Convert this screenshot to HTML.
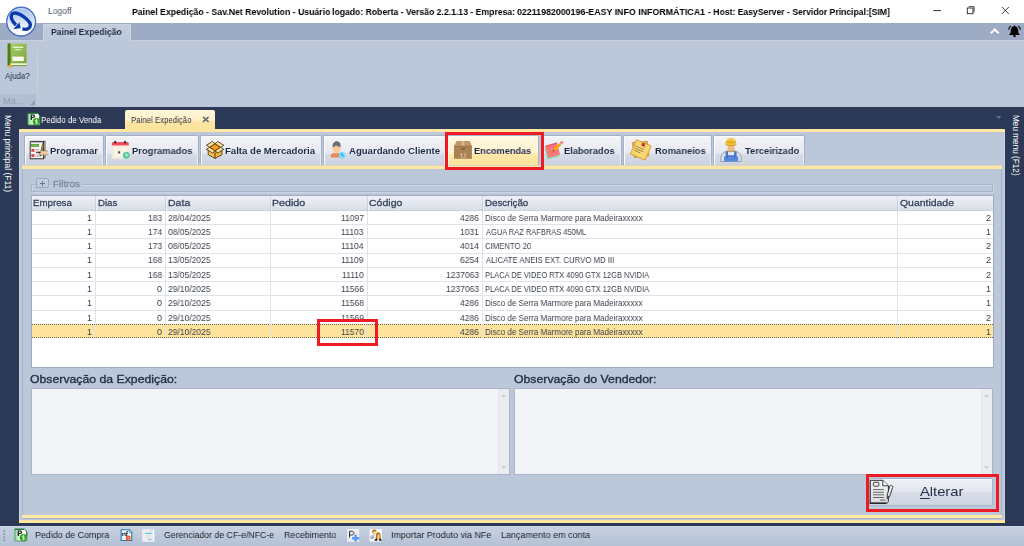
<!DOCTYPE html>
<html>
<head>
<meta charset="utf-8">
<title>Painel Expedição</title>
<style>
*{box-sizing:border-box;margin:0;padding:0}
html,body{width:1024px;height:546px;overflow:hidden;background:#2b3957;font-family:"Liberation Sans",sans-serif;}
.a{position:absolute}
.t{position:absolute;white-space:nowrap;line-height:1;transform-origin:0 50%;will-change:transform}
.r{position:absolute;white-space:nowrap;line-height:1;transform-origin:0 0}
svg{position:absolute;overflow:visible}
#titlebar{left:0;top:0;width:1024px;height:23px;background:#fff}
#tabstrip{left:0;top:23px;width:1024px;height:17px;background:#9dabc4}
#ribbon{left:0;top:40px;width:1024px;height:67px;background:#bcc8da;border-top:1px solid #c7d1e0}
#rtab{left:43px;top:24px;width:88px;height:17px;background:linear-gradient(#c3cddd,#bcc8da);border:1px solid #cad3e1;border-bottom:none;border-radius:1px 1px 0 0}
#navy{left:0;top:107px;width:1024px;height:418px;background:#2b3957}
#status{left:0;top:526px;width:1024px;height:20px;background:linear-gradient(#d3dbe8 0,#c6d0e0 1.5px,#c1ccdd 6px,#b4c0d4 100%)}
.yl{background:#fde7a2}
.itab{position:absolute;top:135px;height:30px;background:linear-gradient(#f3f4f7 0%,#e6e9f0 58%,#d6dbe6 64%,#cbd2df 100%);border:1px solid #a3b0c6;border-bottom:none;border-radius:2px 2px 0 0;box-shadow:inset 1px 1px 0 #fafbfc, inset -1px 0 0 #e9ecf2}
.itab.sel{background:linear-gradient(#fff7e2 0%,#fff2cf 58%,#fee7a8 64%,#fde39c 100%);border-color:#a9b3c7;box-shadow:inset 1px 1px 0 #fffbee}
.vl{position:absolute;width:1px;background:#dfe3ec}
.hl{position:absolute;height:1px;background:#dfe3ec;left:32px;width:961px}
.ta{position:absolute;background:#f3f4f6;border:1px solid #a9b5c9}
.sb{position:absolute;right:0;top:0;bottom:0;width:11px;background:#ebecf0;border-left:1px solid #e2e4ea}
</style>
</head>
<body>
<div class="a" id="titlebar"></div>
<div class="a" id="tabstrip"></div>
<div class="a" id="ribbon"></div>
<div class="a" id="rtab"></div>
<div class="a" id="navy"></div>
<div class="a" id="status"></div>

<!-- window controls -->
<svg style="left:925px;top:0" width="99" height="23" viewBox="0 0 99 23">
 <path d="M8.3 10.6H16" stroke="#333" stroke-width="1" fill="none"/>
 <path d="M43.6 6.6h5.6v5.6" stroke="#444" stroke-width="0.9" fill="none"/>
 <rect x="42.3" y="8" width="5.7" height="5.7" stroke="#222" stroke-width="0.9" fill="#fff"/>
 <path d="M76.8 7l7 7M83.8 7l-7 7" stroke="#222" stroke-width="0.9" fill="none"/>
</svg>
<!-- chevron + bell -->
<svg style="left:988px;top:24px" width="36" height="16" viewBox="0 0 36 16">
 <path d="M2.700 10.400L6.700 6.400L10.700 10.400" stroke="#8c99b2" stroke-width="2.200" fill="none" stroke-linejoin="miter"/>
 <path d="M2.700 9.600L6.700 5.600L10.700 9.600" stroke="#fff" stroke-width="2.100" fill="none" stroke-linejoin="miter"/>
 <path d="M26.500 1.400c-0.500 0-0.900 0.400-1 0.900c-1.700 0.500-2.700 2-2.700 4.200c0 2.200-0.600 3.400-1.800 4.400h11c-1.200-1-1.800-2.200-1.800-4.400c0-2.200-1-3.700-2.700-4.200c-0.100-0.500-0.500-0.900-1-0.900z" fill="#000"/>
 <circle cx="26.500" cy="12" r="1.200" fill="#000"/>
 <path d="M20.600 5.900c0.100-1.700 0.900-3 2.300-3.900M32.400 5.900c-0.100-1.700-0.900-3-2.300-3.900" stroke="#111" stroke-width="1.150" fill="none"/>
</svg>

<!-- logo -->
<svg style="left:5px;top:6px" width="32" height="32" viewBox="0 0 32 32">
 <defs>
  <linearGradient id="lg1" x1="0" y1="0" x2="0" y2="1"><stop offset="0" stop-color="#a4bcef"/><stop offset="0.4" stop-color="#cbd9f7"/><stop offset="0.75" stop-color="#f4f7fd"/><stop offset="1" stop-color="#ffffff"/></linearGradient>
 </defs>
 <circle cx="16.150" cy="15.650" r="14.400" fill="url(#lg1)" stroke="#4a70cc" stroke-width="1.400"/>
 <circle cx="16.150" cy="15.650" r="13.100" fill="none" stroke="#ffffff" stroke-width="0.800" opacity="0.550"/>
 <path d="M17.400 22.900C20 23.500 23.600 23.300 24.900 21C26.500 18.200 23.500 13.900 18.200 10.300C13.500 7.200 8.800 6.200 7 8.200C5.300 10.200 6.300 14.500 11 19" fill="none" stroke="#0a3aa8" stroke-width="3.300"/>
 <path d="M14.400 16.200L15.700 21.900L8.300 23.300z" fill="#0a3aa8"/>
</svg>

<!-- ribbon: book icon, group -->
<div class="a" style="left:0;top:94px;width:36px;height:12.5px;background:#b2bfd3"></div>
<div class="a" style="left:37px;top:43px;width:1px;height:62px;background:linear-gradient(#bcc8da,#c9d2e1 30%,#c9d2e1 70%,#bcc8da)"></div>
<svg style="left:7px;top:43px" width="21" height="25" viewBox="0 0 21 25">
 <defs><linearGradient id="bk" x1="0" y1="0" x2="1" y2="1"><stop offset="0" stop-color="#a9d06a"/><stop offset="1" stop-color="#7aa33e"/></linearGradient></defs>
 <rect x="0.600" y="0.400" width="19" height="22" rx="1.200" fill="url(#bk)"/>
 <rect x="0.600" y="0.400" width="3" height="22" fill="#4f7d1e"/>
 <rect x="3.400" y="20.300" width="16.200" height="2.100" fill="#f3f0dc"/>
 <rect x="0.600" y="22.200" width="19" height="0.900" fill="#6a9430"/>
 <rect x="5.800" y="3.600" width="10.500" height="1.300" fill="#eef5dd"/>
 <rect x="8" y="6.100" width="6" height="1.200" fill="#dcebbf"/>
 <rect x="5.300" y="13.600" width="11.500" height="4.400" fill="#fdf6ea"/>
 <rect x="2" y="21.800" width="3.200" height="2.600" fill="#f5a623"/>
</svg>
<svg style="left:29px;top:99px" width="7" height="7" viewBox="0 0 7 7"><path d="M6 1v5h-5z" fill="#8f9cb3"/></svg>

<!-- doc tabs -->
<div class="a" style="left:125px;top:110px;width:89.500px;height:20px;background:linear-gradient(#fff6da 0%,#fff0c6 50%,#fde5a3 60%,#fde29c 100%);border-radius:2px 2px 0 0"></div>
<svg style="left:202px;top:116px" width="8" height="7" viewBox="0 0 8 7"><path d="M1 0.800l5.600 5M6.600 0.800l-5.600 5" stroke="#6b6f7a" stroke-width="1.700" fill="none"/></svg>
<svg style="left:996px;top:116px" width="6" height="4" viewBox="0 0 6 4"><path d="M0 0h5.500l-2.750 3.200z" fill="#5d6b8a"/></svg>
<svg style="left:27px;top:112px" width="14" height="14" viewBox="0 0 14 14">
 <defs><linearGradient id="psg" x1="0" y1="0" x2="1" y2="0"><stop offset="0" stop-color="#8fdc92"/><stop offset="0.45" stop-color="#e9f8e9"/><stop offset="1" stop-color="#ffffff"/></linearGradient></defs>
 <path d="M0.900 1.100H10.200L12.800 3.700V13H0.900z" fill="url(#psg)" stroke="#2f8a4a" stroke-width="0.700"/>
 <path d="M0.900 1.200H10.200L12.800 3.800" fill="none" stroke="#0e5a2a" stroke-width="1.100"/>
 <path d="M12.800 3.800V8" fill="none" stroke="#0e5a2a" stroke-width="0.900"/>
 <path d="M10.200 1.100L12.800 3.700H10.200z" fill="#dff3e2"/>
 <path d="M3.700 7.900V2.600h2.400c1.200 0 1.900 0.600 1.900 1.700s-0.700 1.700-1.900 1.700h-1.200v1.900zM4.900 3.500v1.600h1.100c0.500 0 0.800-0.300 0.800-0.800s-0.300-0.800-0.800-0.800z" fill="#1a1a1a" fill-rule="evenodd"/>
 <circle cx="9.400" cy="9.600" r="3.600" fill="#2f9e1c"/>
 <path d="M10.700 8.500c-0.300-0.500-0.800-0.700-1.300-0.700c-0.700 0-1.200 0.350-1.200 0.900c0 1.300 2.600 0.500 2.600 1.900c0 0.550-0.500 0.950-1.300 0.950c-0.600 0-1.100-0.250-1.400-0.750M9.400 6.900v5.400" fill="none" stroke="#d9f5d2" stroke-width="0.850"/>
</svg>


<!-- panels -->
<div class="a yl" style="left:19.200px;top:129px;width:986px;height:3px;border-radius:1px 1px 0 0"></div>
<div class="a" style="left:19.200px;top:132px;width:986px;height:388.300px;background:#bcc8da;border-left:1px solid #c9d2e1;border-right:1px solid #c9d2e1"></div>
<div class="a yl" style="left:19.200px;top:520.300px;width:986px;height:3px"></div>
<div class="a" style="left:22px;top:165px;width:980px;height:1px;background:#d8d6c2"></div>
<div class="a yl" style="left:22px;top:166px;width:980px;height:3px"></div>
<div class="a" style="left:22px;top:169px;width:980px;height:345.800px;background:#bcc8da;border-left:1px solid #a9b5ca;border-right:1px solid #a9b5ca"></div>
<div class="a yl" style="left:22px;top:514.800px;width:980px;height:3px"></div>
<div class="a" style="left:22px;top:517.800px;width:980px;height:1px;background:#a9b5ca"></div>

<!-- inner tabs -->
<div class="itab" style="left:23.500px;width:80.500px"></div>
<div class="itab" style="left:105.300px;width:94px"></div>
<div class="itab" style="left:200.400px;width:121.400px"></div>
<div class="itab" style="left:323px;width:122.600px"></div>
<div class="itab sel" style="left:447px;width:92.400px"></div>
<div class="itab" style="left:541.200px;width:80.400px"></div>
<div class="itab" style="left:623px;width:88.800px"></div>
<div class="itab" style="left:713px;width:92.300px"></div>
<!-- Programar: checklist + hand -->
<svg style="left:29px;top:140px" width="20" height="20" viewBox="0 0 20 20">
 <rect x="2.600" y="1.300" width="13.400" height="16.400" fill="#e9eaee" stroke="#3a3a3a" stroke-width="0.800"/>
 <rect x="1.200" y="1.800" width="13.400" height="17" fill="#f4f5f7" stroke="#1e1e1e" stroke-width="0.900"/>
 <rect x="2.400" y="4.200" width="7.400" height="2.500" fill="#7ac142" stroke="#3f7d1f" stroke-width="0.500"/>
 <rect x="2.400" y="8.900" width="3.100" height="2.900" fill="#db4a3c"/>
 <rect x="2.400" y="14.100" width="3.100" height="2.900" fill="#db4a3c"/>
 <path d="M6.600 9.500h3.600M6.600 11h2.600M6.600 14.800h3M6.600 16.200h4.200" stroke="#9a9ca4" stroke-width="0.700"/>
 <path d="M7 12.600l3.200-0.600" stroke="#333" stroke-width="0.900"/>
 <path d="M13.400 4.300l1.200 0.500l-1.700 10.200l-1.800 1.400l0.100-2.400z" fill="#c7a526" stroke="#4a3c10" stroke-width="0.600" stroke-linejoin="round"/>
 <path d="M13.100 3.600l1.700 0.700" stroke="#5a4a18" stroke-width="1"/>
 <path d="M10.200 11.400c1.200-0.700 2.500-0.800 3.600-0.500l5.500 0.100v3.700l-5 0.200c-1.600 0.500-3.200 0-4.400-1z" fill="#f2cba4"/>
 <path d="M10 11.700c1.400-0.900 2.700-1 3.800-0.800l5.400 0.100M9.900 13.900c1.200 1 2.800 1.400 4.400 1l5-0.200" stroke="#8a6a4a" stroke-width="0.500" fill="none"/>
 <path d="M9 12.200l2.400-0.500l0.400 1.300l-2.600 0.400z" fill="#2b2b2b"/>
</svg>
<!-- Programados: calendar -->
<svg style="left:111px;top:140px" width="20" height="20" viewBox="0 0 20 20">
 <path d="M0.800 5.700V3.600c0-0.900 0.700-1.600 1.600-1.600h13.800c0.900 0 1.600 0.700 1.600 1.600v2.100z" fill="#ef4c5b"/>
 <rect x="0.800" y="5.600" width="17" height="13.200" fill="#f3eedc"/>
 <g fill="#fbf8ee"><rect x="3.300" y="8.200" width="2.700" height="2.300"/><rect x="6.700" y="8.200" width="2.700" height="2.300"/><rect x="10.100" y="8.200" width="2.700" height="2.300"/><rect x="13.500" y="8.200" width="2.400" height="2.300"/>
 <rect x="3.300" y="11.200" width="2.700" height="2.300"/><rect x="10.100" y="11.200" width="2.700" height="2.300"/><rect x="13.500" y="11.200" width="2.400" height="2.300"/>
 <rect x="3.300" y="14.200" width="2.700" height="2.300"/><rect x="6.700" y="14.200" width="2.700" height="2.300"/><rect x="10.100" y="14.200" width="2.700" height="2.300"/></g>
 <rect x="7" y="11.300" width="2.100" height="2.100" fill="#6b4a3a"/>
 <rect x="3.400" y="0.800" width="1.700" height="2.800" rx="0.700" fill="#1b2a47"/>
 <rect x="13.100" y="0.800" width="1.700" height="2.800" rx="0.700" fill="#1b2a47"/>
 <circle cx="15.300" cy="15.300" r="3.500" fill="#5ec9a2"/>
 <path d="M15.100 13.300v2.200h1.800" stroke="#fff" stroke-width="0.900" fill="none"/>
</svg>
<!-- Falta de Mercadoria: open box -->
<svg style="left:205px;top:140px" width="20" height="20" viewBox="0 0 20 20">
 <g stroke="#3b2a0e" stroke-width="0.800" stroke-linejoin="round">
  <path d="M3.200 9.200L10.100 13.200V18.400L3.200 14.600z" fill="#f7c556"/>
  <path d="M17 9.200L10.100 13.200V18.400L17 14.600z" fill="#eeb441"/>
  <path d="M3.200 9.200L4.600 7.300L15.600 7.300L17 9.200L10.100 13.200z" fill="#e08f1c" stroke="none"/>
  <path d="M4.600 7.300L10.100 3.700L15.600 7.300L10.100 10.800z" fill="#ff9a1c"/>
  <path d="M4.600 7.300L10.100 3.700L7.400 1.500L1.300 5.300z" fill="#f9dc93"/>
  <path d="M15.600 7.300L10.100 3.700L12.800 1.500L18.900 5.300z" fill="#f9dc93"/>
  <path d="M4.600 7.300L10.100 10.800L7.500 13L1.300 9.300z" fill="#f9dc93"/>
  <path d="M15.600 7.300L10.100 10.800L12.700 13L18.900 9.300z" fill="#f9dc93"/>
 </g>
 <path d="M10.100 14v3.600" stroke="#c98a1e" stroke-width="0.800"/>
</svg>
<!-- Aguardando Cliente: person + clock -->
<svg style="left:329px;top:140px" width="20" height="20" viewBox="0 0 20 20">
 <path d="M1.800 17.400v-1.700c0-1.700 1.400-2.800 3.400-2.800h4.400c1.200 0 1.800 0.600 1.800 1.400v3.100z" fill="#e98a5c"/>
 <rect x="6.200" y="11" width="2.700" height="2.600" fill="#f6c39a"/>
 <ellipse cx="7.600" cy="8.300" rx="4" ry="4.400" fill="#f9caa1"/>
 <path d="M3.700 7.300c-0.500-3.600 1.400-6.100 4-6.100c2.700 0 4.300 2.200 3.900 5.600c-1.600 0.100-3.400-0.600-4.500-1.600c-0.800 0.900-2 1.700-3.400 2.100z" fill="#6b6f6f"/>
 <circle cx="13.100" cy="15.200" r="3.200" fill="#6fdcff"/>
 <path d="M12.600 13.500l0.500 1.900l1.400 0.700" stroke="#2a6fd0" stroke-width="0.800" fill="none"/>
</svg>
<!-- Encomendas: closed box -->
<svg style="left:453px;top:140px" width="20" height="20" viewBox="0 0 20 20">
 <path d="M3.500 1H16.700L18.900 5.900H1z" fill="#c59766"/>
 <path d="M9 1h2.200l0.300 4.900H8.700z" fill="#dbb68b"/>
 <rect x="1" y="5.900" width="17.900" height="12.900" fill="#aa8255"/>
 <rect x="1" y="5.900" width="17.900" height="0.700" fill="#9a744a"/>
 <rect x="8" y="8" width="4.400" height="1.500" rx="0.700" fill="#7b5c3a"/>
 <path d="M7.500 14.200l1-1.300l1 1.300h-0.500v2.600h-1v-2.600zM11 14.200l1-1.300l1 1.300h-0.500v2.600h-1v-2.600z" fill="#d9c3a3"/>
 <rect x="7.300" y="17.200" width="5.800" height="0.700" fill="#cdb594"/>
</svg>
<!-- Elaborados: notes + pencil -->
<svg style="left:544px;top:140px" width="20" height="20" viewBox="0 0 20 20">
 <path d="M0.500 9L12.400 6L14.600 16.800L3 19.300z" fill="#a6d4f2"/>
 <path d="M0.700 7.900L12.600 4.700L15.500 16L3.500 19.200z" fill="#7fe0a8"/>
 <path d="M1.200 5.900L12.800 2.600L16.100 14.400L4.200 18z" fill="#fb7878"/>
 <path d="M1.200 5.900L12.800 2.600L13.100 3.700L1.500 7z" fill="#f14c62"/>
 <path d="M8.800 11.400l0.700-2.300l6.300-6.300l1.900 1.900l-6.500 6.100z" fill="#f6aa06"/>
 <path d="M9.800 9.300l0.900 1.100" stroke="#d88a00" stroke-width="0.500"/>
 <path d="M8.800 11.400l0.500-1.700l1.300 1.200z" fill="#3a3a4a"/>
 <path d="M15.200 3.400l0.900-0.900l1.900 1.900l-0.900 0.900z" fill="#b9d3e2"/>
 <circle cx="17.700" cy="2.500" r="1.600" fill="#ff7e7e"/>
</svg>
<!-- Romaneios: sticky notes -->
<svg style="left:629px;top:138px" width="24" height="24" viewBox="0 0 24 24">
 <path d="M3.400 4.400L18.400 3.200L20 17.700L5.200 19.600z" fill="#e4ae3e" stroke="#c58a26" stroke-width="0.600"/>
 <path d="M7.400 1.600L22.200 7.900L16.200 22.200L1.300 15.900z" fill="#f6cf60" stroke="#c8902c" stroke-width="0.700" stroke-linejoin="round"/>
 <path d="M8.300 3.400L20.400 8.600L15.500 20.200L3.300 15z" fill="#fadc80" opacity="0.700"/>
 <g stroke="#7a5a26" stroke-width="0.650" stroke-linecap="round" fill="none">
  <path d="M6.800 8.200l8 3.400"/><path d="M6 10.300l8 3.400"/><path d="M5.300 12.300l5.600 2.400"/>
 </g>
 <path d="M14.600 8.200l1.700 1.800" stroke="#a58a58" stroke-width="0.800"/>
 <circle cx="14.200" cy="6.800" r="1.700" fill="#d0141e"/>
 <circle cx="13.800" cy="6.300" r="0.600" fill="#f0626a"/>
</svg>
<!-- Terceirizado: worker -->
<svg style="left:719px;top:137px" width="24" height="26" viewBox="0 0 24 26">
 <defs>
  <linearGradient id="hat" x1="0" y1="0" x2="0" y2="1"><stop offset="0" stop-color="#f7cc3a"/><stop offset="1" stop-color="#d6940c"/></linearGradient>
  <linearGradient id="ovr" x1="0" y1="0" x2="0" y2="1"><stop offset="0" stop-color="#3d6cc4"/><stop offset="1" stop-color="#5d8be0"/></linearGradient>
 </defs>
 <path d="M1.900 24.500c-0.400-4.600 0.800-8.400 4.200-9.700l3.300-1.200h5.400l3.300 1.200c3.400 1.300 4.600 5.100 4.200 9.700z" fill="#dfe3e9" stroke="#7c8693" stroke-width="0.700"/>
 <path d="M8.600 8.200h7v4.200c0 1.700-1.500 3.200-3.500 3.200s-3.500-1.500-3.500-3.200z" fill="#ecbd8e"/>
 <path d="M9.600 12.500c0.700 1.300 1.500 1.900 2.500 1.900s1.800-0.600 2.500-1.900v2.400h-5z" fill="#c48a58"/>
 <path d="M6.600 15.100l2.200-1.300l0.400 4.200h5.800l0.400-4.200l2.200 1.300V19.300l1.600 0.300V24.500H5V19.600l1.600-0.300z" fill="url(#ovr)"/>
 <rect x="9.200" y="15.400" width="5.800" height="2.800" fill="#e8ebef"/>
 <circle cx="8.400" cy="20.300" r="0.700" fill="#1e3c86"/><circle cx="15.800" cy="20.300" r="0.700" fill="#1e3c86"/>
 <path d="M6.600 20.800h11" stroke="#6f9bea" stroke-width="0.600"/>
 <path d="M6.500 8.200c-0.500-4.600 1.900-7.300 5.400-7.300s5.900 2.700 5.400 7.300c-3.400 0.900-7.400 0.900-10.800 0z" fill="url(#hat)"/>
 <path d="M6.300 6.600c3.800 0.800 7.800 0.800 11.600 0" stroke="#f9e08a" stroke-width="0.900" fill="none"/>
 <path d="M7.200 3.500c2.800-1 7-1 9.800 0" stroke="#fbe48f" stroke-width="0.700" fill="none"/>
</svg>


<!-- filtros -->
<div class="a" style="left:30.700px;top:184px;width:962.500px;height:8px;border:1px solid #a9b5c9;box-shadow:inset 1px 1px 0 #ccd5e3, 1px 1px 0 #ccd5e3"></div>
<div class="a" style="left:52.500px;top:178px;width:29.500px;height:12px;background:#bcc8da"></div>
<div class="a" style="left:36px;top:178px;width:13px;height:10px;border:1px solid #9ba7bf;border-radius:2px;background:linear-gradient(#c6d0e0,#bdc9db)"></div>
<div class="a" style="left:40px;top:183px;width:5px;height:1px;background:#6a7790"></div><div class="a" style="left:42px;top:181px;width:1px;height:5px;background:#6a7790"></div>

<!-- grid -->
<div class="a" style="left:31px;top:195.400px;width:962.500px;height:172.800px;background:#fff;border:1px solid #9fabc2"></div>
<div class="a" style="left:32px;top:196px;width:960.500px;height:14.600px;background:linear-gradient(#eef0f5 0%,#e4e8ef 50%,#d9dee8 100%);border-bottom:1px solid #cbd2de"></div>
<div class="a" style="left:32px;top:324.18px;width:960.5px;height:13.66px;background:#fde39c;border-top:1px dotted #6b6550;border-bottom:1px dotted #6b6550"></div>
<div class="hl" style="top:224.06px"></div>
<div class="hl" style="top:238.32px"></div>
<div class="hl" style="top:252.58px"></div>
<div class="hl" style="top:266.84px"></div>
<div class="hl" style="top:281.10px"></div>
<div class="hl" style="top:295.36px"></div>
<div class="hl" style="top:309.62px"></div>
<div class="vl" style="left:94.9px;top:210.4px;height:128.34px"></div>
<div class="vl" style="left:94.9px;top:196px;height:14.6px;background:linear-gradient(#d5dbe5,#bcc6d6)"></div>
<div class="vl" style="left:95.9px;top:196px;height:14.6px;background:#eceff4"></div>
<div class="vl" style="left:164.8px;top:210.4px;height:128.34px"></div>
<div class="vl" style="left:164.8px;top:196px;height:14.6px;background:linear-gradient(#d5dbe5,#bcc6d6)"></div>
<div class="vl" style="left:165.8px;top:196px;height:14.6px;background:#eceff4"></div>
<div class="vl" style="left:270.0px;top:210.4px;height:128.34px"></div>
<div class="vl" style="left:270.0px;top:196px;height:14.6px;background:linear-gradient(#d5dbe5,#bcc6d6)"></div>
<div class="vl" style="left:271.0px;top:196px;height:14.6px;background:#eceff4"></div>
<div class="vl" style="left:366.5px;top:210.4px;height:128.34px"></div>
<div class="vl" style="left:366.5px;top:196px;height:14.6px;background:linear-gradient(#d5dbe5,#bcc6d6)"></div>
<div class="vl" style="left:367.5px;top:196px;height:14.6px;background:#eceff4"></div>
<div class="vl" style="left:482.1px;top:210.4px;height:128.34px"></div>
<div class="vl" style="left:482.1px;top:196px;height:14.6px;background:linear-gradient(#d5dbe5,#bcc6d6)"></div>
<div class="vl" style="left:483.1px;top:196px;height:14.6px;background:#eceff4"></div>
<div class="vl" style="left:896.8px;top:210.4px;height:128.34px"></div>
<div class="vl" style="left:896.8px;top:196px;height:14.6px;background:linear-gradient(#d5dbe5,#bcc6d6)"></div>
<div class="vl" style="left:897.8px;top:196px;height:14.6px;background:#eceff4"></div>

<!-- textareas -->
<div class="ta" style="left:31px;top:388px;width:479.300px;height:86.600px"><div class="sb"></div>
 <svg style="right:3px;top:4.500px" width="5" height="3" viewBox="0 0 5 3"><path d="M0 3l2.500-3l2.500 3z" fill="#c9cdd6"/></svg>
 <svg style="right:3px;bottom:4.500px" width="5" height="3" viewBox="0 0 5 3"><path d="M0 0l2.500 3l2.500-3z" fill="#c9cdd6"/></svg>
</div>
<div class="ta" style="left:513.500px;top:388px;width:479.300px;height:86.600px"><div class="sb"></div>
 <svg style="right:3px;top:4.500px" width="5" height="3" viewBox="0 0 5 3"><path d="M0 3l2.500-3l2.500 3z" fill="#c9cdd6"/></svg>
 <svg style="right:3px;bottom:4.500px" width="5" height="3" viewBox="0 0 5 3"><path d="M0 0l2.500 3l2.500-3z" fill="#c9cdd6"/></svg>
</div>

<!-- alterar button -->
<div class="a" style="left:869px;top:477.500px;width:124px;height:28.500px;background:linear-gradient(#eef0f5 0%,#e3e6ee 48%,#d6dbe6 52%,#d0d6e2 100%);border:1px solid #a7b3c8;border-radius:2px;box-shadow:inset 1px 1px 0 #f8f9fb"></div>
<svg style="left:869px;top:479px" width="25" height="26" viewBox="0 0 25 26">
 <defs><linearGradient id="alg" x1="0" y1="0" x2="0" y2="1"><stop offset="0" stop-color="#f4f5f7"/><stop offset="1" stop-color="#d9dce3"/></linearGradient></defs>
 <path d="M1.300 1.300H13.800L19.400 6.800V21.500c0 1.500-0.700 2.700-2 2.700H1.300z" fill="url(#alg)" stroke="#2a2a2a" stroke-width="1"/>
 <path d="M13.800 1.300V6.800H19.400" fill="#f2f3f5" stroke="#2a2a2a" stroke-width="0.900"/>
 <path d="M0.600 24.200H17.400" stroke="#1f1f1f" stroke-width="1.300"/>
 <rect x="4.400" y="3.300" width="5.400" height="3.900" rx="0.800" fill="#eceef1" stroke="#2a2a2a" stroke-width="0.900"/>
 <path d="M4 10.600h11M4 13.300h11M4 15.800h11M4 18.500h11" stroke="#4a4a4a" stroke-width="0.800"/>
 <path d="M11 21.100h5.600" stroke="#5a5a5a" stroke-width="0.900"/>
 <path d="M20.700 7.100c0.600-0.800 1.700-0.900 2.400-0.500c0.700 0.400 0.800 1.300 0.500 2.100L20.500 17.800l-2.200 1.900l-0.200-2.900z" fill="#e6e8ec" stroke="#2a2a2a" stroke-width="0.900" stroke-linejoin="round"/>
 <path d="M18.200 16.900l2.300 0.900" stroke="#2a2a2a" stroke-width="0.800"/>
 <path d="M18.300 19.700l0.100-1.400l1 0.500z" fill="#111"/>
</svg>


<!-- status icons -->
<svg style="left:2.500px;top:529.500px" width="3" height="12" viewBox="0 0 3 12"><g fill="#6f7c96"><rect x="0.500" y="0.500" width="1.400" height="1.400"/><rect x="0.500" y="3.500" width="1.400" height="1.400"/><rect x="0.500" y="6.500" width="1.400" height="1.400"/><rect x="0.500" y="9.500" width="1.400" height="1.400"/></g></svg>
<svg style="left:13.700px;top:528.400px" width="14" height="14" viewBox="0 0 14 14">
 <path d="M0.900 1.100H10.200L12.800 3.700V13H0.900z" fill="url(#psg)" stroke="#2f8a4a" stroke-width="0.700"/>
 <path d="M0.900 1.200H10.200L12.800 3.800" fill="none" stroke="#0e5a2a" stroke-width="1.100"/>
 <path d="M12.800 3.800V8" fill="none" stroke="#0e5a2a" stroke-width="0.900"/>
 <path d="M10.200 1.100L12.800 3.700H10.200z" fill="#dff3e2"/>
 <path d="M3.700 7.900V2.600h2.400c1.200 0 1.900 0.600 1.900 1.700s-0.700 1.700-1.900 1.700h-1.200v1.900zM4.900 3.500v1.600h1.100c0.500 0 0.800-0.300 0.800-0.800s-0.300-0.800-0.800-0.800z" fill="#1a1a1a" fill-rule="evenodd"/>
 <circle cx="9.400" cy="9.600" r="3.600" fill="#2f9e1c"/>
 <path d="M10.700 8.500c-0.300-0.500-0.800-0.700-1.300-0.700c-0.700 0-1.200 0.350-1.200 0.900c0 1.300 2.600 0.500 2.600 1.900c0 0.550-0.500 0.950-1.300 0.950c-0.600 0-1.100-0.250-1.400-0.750M9.400 6.900v5.400" fill="none" stroke="#d9f5d2" stroke-width="0.850"/>
</svg>
<!-- nf-e -->
<svg style="left:120px;top:529px" width="13" height="13" viewBox="0 0 13 13">
 <path d="M1.200 0.700H9.400L11.800 3.100V11.500H1.200z" fill="#eaf6fd" stroke="#2a78a8" stroke-width="1.100" stroke-linejoin="round"/>
 <path d="M9.200 0.800V3.300H11.700" fill="#fff" stroke="#1f6a9a" stroke-width="0.700"/>
 <path d="M2.300 7V3.900h0.900v0.500c0.300-0.400 0.700-0.600 1.200-0.600c0.800 0 1.200 0.500 1.200 1.300V7h-0.900V5.300c0-0.500-0.200-0.700-0.600-0.700s-0.900 0.300-0.900 0.900V7z" fill="#1a1a1a"/><path d="M6.300 7V4.600h-0.500V3.900h0.500V3.500c0-0.800 0.400-1.200 1.200-1.200c0.200 0 0.400 0 0.500 0.050v0.700c-0.100 0-0.200-0.050-0.300-0.050c-0.300 0-0.500 0.150-0.500 0.500v0.400h0.700v0.700h-0.700V7z" fill="#1a1a1a"/>
 <path d="M6.500 9.100h3.500c0-1.400-0.700-2.100-1.700-2.100s-1.800 0.800-1.800 2.100s0.800 2 1.900 2c0.700 0 1.200-0.300 1.500-0.700" fill="none" stroke="#f04a1c" stroke-width="1.250"/>
</svg>
<!-- doc -->
<svg style="left:142px;top:529px" width="13" height="13" viewBox="0 0 13 13">
 <rect x="0.300" y="0.400" width="12" height="12.200" fill="#fbfbfc"/>
 <rect x="1.700" y="0.400" width="9" height="12.200" fill="#eef0f3" stroke="#d7dbe2" stroke-width="0.500"/>
 <path d="M8.600 0.400L10.700 2.600H8.600z" fill="#c9ced8"/>
 <rect x="3.200" y="3.800" width="6.600" height="1.100" rx="0.500" fill="#5cc8f2"/>
 <rect x="6.200" y="9.900" width="3.600" height="1.100" rx="0.500" fill="#5cc8f2"/>
 <path d="M3.200 6.400h6.600M3.200 8.100h6.600M5.400 5.600v3.600M7.600 5.600v3.600" stroke="#d9dce2" stroke-width="0.500" fill="none"/>
 <path d="M3.200 2.400h4.600M3.200 9.300h6.600" stroke="#f0d9c8" stroke-width="0.400" fill="none"/>
</svg>
<!-- P+ -->
<svg style="left:347px;top:529px" width="13" height="13" viewBox="0 0 13 13">
 <rect x="0.400" y="0.300" width="11.400" height="12" fill="#ebecee"/>
 <rect x="0.400" y="0.300" width="11.400" height="12" fill="none" stroke="#f6f6f7" stroke-width="0.600"/>
 <path d="M2.500 8.600V2.300h2.300c1.300 0 2.100 0.700 2.100 1.800s-0.800 1.900-2.100 1.900h-2.300" fill="none" stroke="#222" stroke-width="0.900"/>
 <path d="M7.300 5.800h2.600v2.100h2.200v2.500h-2.200v2.200h-2.600v-2.200h-2.300v-2.500h2.300z" fill="#5a98ff"/>
</svg>
<!-- people -->
<svg style="left:369px;top:529px" width="14" height="13" viewBox="0 0 14 13">
 <rect x="0.600" y="0.300" width="12.200" height="12.200" fill="#fff"/>
 <path d="M1 7.800c0.800-1.400 2.400-2 4-2l1.200 3.400l-4.200 1.200z" fill="#b8bcd0"/>
 <path d="M1.400 9.500l3.800-1.300" stroke="#8f93ab" stroke-width="0.600"/>
 <ellipse cx="5.200" cy="3.900" rx="1.700" ry="2.100" fill="#f3c79c"/>
 <path d="M2.900 3.400c-0.300-1.900 1-3 2.400-3c1.500 0 2.500 0.900 2.400 2.100c-1 0.300-2.100-0.100-2.800-0.600c-0.300 0.800-1 1.300-2 1.500z" fill="#a87a18"/>
 <path d="M5 5.800l1.600 0.200l0.400 3.400h-2z" fill="#e8e8ee"/>
 <path d="M7 5.600c0.200-1.700 1.400-2.500 2.600-2.300c1.500 0.300 2 1.600 2 3.300l0.300 4.400h-5.200z" fill="#b27612"/>
 <path d="M8.300 6.300c0.200-0.800 0.900-1.300 1.500-1.100c0.700 0.200 0.900 0.900 0.800 1.800l0.200 4h-2.700z" fill="#f2c089"/>
 <path d="M5.400 11.700c0.300-1.400 1.400-2.100 2.600-2.200l0.400 2.200zM10.400 9.500c1.200 0.100 2.200 0.800 2.500 2.200h-2.900z" fill="#1c1c1c"/>
</svg>


<div class="t" style="left:48.19px;top:7px;font-size:9px;color:#4a5468;transform:scaleX(0.9485);">Logoff</div>
<div class="t" style="left:131.79px;top:7px;font-size:9.5px;color:#000;font-weight:bold;transform:scaleX(0.9176);">Painel Expedição - Sav.Net Revolution - Usuário</div>
<div class="t" style="left:332.32px;top:7px;font-size:9.5px;color:#000;font-weight:bold;transform:scaleX(0.9098);">logado: Roberta - Versão 2.2.1.13 - Empresa:</div>
<div class="t" style="left:517.27px;top:7px;font-size:9.5px;color:#000;font-weight:bold;transform:scaleX(0.9305);">02211982000196-EASY INFO INFORMÁTICA1</div>
<div class="t" style="left:708.47px;top:7px;font-size:9.5px;color:#000;font-weight:bold;transform:scaleX(0.9066);">- Host: EasyServer - Servidor Principal:[SIM]</div>
<div class="t" style="left:51.25px;top:27px;font-size:9.5px;color:#1e2b47;font-weight:bold;transform:scaleX(0.9049);">Painel Expedição</div>
<div class="t" style="left:4.70px;top:72px;font-size:9px;color:#1e2b47;transform:scaleX(0.8865);">Ajuda?</div>
<div class="t" style="left:3.23px;top:97px;font-size:9px;color:#8d9ab0;transform:scaleX(1.0270);">Ma...</div>
<div class="t" style="left:40.87px;top:115px;font-size:9.5px;color:#fff;transform:scaleX(0.8348);">Pedido de Venda</div>
<div class="t" style="left:131.18px;top:115px;font-size:9.5px;color:#2d3447;transform:scaleX(0.8221);">Painel Expedição</div>
<div class="t" style="left:49.70px;top:146px;font-size:9.5px;color:#1e2b47;font-weight:bold;transform:scaleX(0.9937);">Programar</div>
<div class="t" style="left:131.51px;top:146px;font-size:9.5px;color:#1e2b47;font-weight:bold;transform:scaleX(0.9868);">Programados</div>
<div class="t" style="left:225.00px;top:146px;font-size:9.5px;color:#1e2b47;font-weight:bold;transform:scaleX(1.0085);">Falta de Mercadoria</div>
<div class="t" style="left:349.25px;top:146px;font-size:9.5px;color:#1e2b47;font-weight:bold;transform:scaleX(1.0084);">Aguardando Cliente</div>
<div class="t" style="left:473.92px;top:146px;font-size:9.5px;color:#1e2b47;font-weight:bold;transform:scaleX(0.9682);">Encomendas</div>
<div class="t" style="left:564.31px;top:146px;font-size:9.5px;color:#1e2b47;font-weight:bold;transform:scaleX(0.9765);">Elaborados</div>
<div class="t" style="left:654.70px;top:146px;font-size:9.5px;color:#1e2b47;font-weight:bold;transform:scaleX(0.9901);">Romaneios</div>
<div class="t" style="left:745.00px;top:146px;font-size:9.5px;color:#1e2b47;font-weight:bold;transform:scaleX(0.9818);">Terceirizado</div>
<div class="t" style="left:53.02px;top:179px;font-size:9.5px;color:#7d8aa4;transform:scaleX(1.0465);-webkit-text-stroke:0.3px #7d8aa4;">Filtros</div>
<div class="t" style="left:33.23px;top:198px;font-size:9.5px;color:#36435d;transform:scaleX(1.0201);-webkit-text-stroke:0.28px #36435d;">Empresa</div>
<div class="t" style="left:97.94px;top:198px;font-size:9.5px;color:#36435d;transform:scaleX(1.0167);-webkit-text-stroke:0.28px #36435d;">Dias</div>
<div class="t" style="left:167.57px;top:198px;font-size:9.5px;color:#36435d;transform:scaleX(1.1077);-webkit-text-stroke:0.28px #36435d;">Data</div>
<div class="t" style="left:271.66px;top:198px;font-size:9.5px;color:#36435d;transform:scaleX(1.1228);-webkit-text-stroke:0.28px #36435d;">Pedido</div>
<div class="t" style="left:369.44px;top:198px;font-size:9.5px;color:#36435d;transform:scaleX(1.1111);-webkit-text-stroke:0.28px #36435d;">Código</div>
<div class="t" style="left:485.23px;top:198px;font-size:9.5px;color:#36435d;transform:scaleX(1.0244);-webkit-text-stroke:0.28px #36435d;">Descrição</div>
<div class="t" style="left:900.45px;top:198px;font-size:9.5px;color:#36435d;transform:scaleX(1.0984);-webkit-text-stroke:0.28px #36435d;">Quantidade</div>
<div class="t" style="left:30.17px;top:374px;font-size:11.5px;color:#253049;transform:scaleX(1.0659);-webkit-text-stroke:0.35px #253049;">Observação da Expedição:</div>
<div class="t" style="left:513.97px;top:374px;font-size:11.5px;color:#253049;transform:scaleX(1.0662);-webkit-text-stroke:0.35px #253049;">Observação do Vendedor:</div>
<div class="t" style="left:919.70px;top:485px;font-size:13px;color:#253049;transform:scaleX(1.1316);"><u style="text-decoration-thickness:1.4px;text-underline-offset:1.6px">A</u>lterar</div>
<div class="t" style="left:35.00px;top:530px;font-size:9.5px;color:#20242e;transform:scaleX(0.9376);">Pedido de Compra</div>
<div class="t" style="left:164.24px;top:530px;font-size:9.5px;color:#20242e;transform:scaleX(0.9185);">Gerenciador de CF-e/NFC-e</div>
<div class="t" style="left:284.10px;top:530px;font-size:9.5px;color:#20242e;transform:scaleX(0.9352);">Recebimento</div>
<div class="t" style="left:390.99px;top:530px;font-size:9.5px;color:#20242e;transform:scaleX(0.9412);">Importar Produto via NFe</div>
<div class="t" style="left:500.89px;top:530px;font-size:9.5px;color:#20242e;transform:scaleX(0.9480);">Lançamento em conta</div>
<div class="t" style="left:87.35px;top:214px;font-size:9px;color:#3a3f4b;transform:scaleX(0.9450);">1</div>
<div class="t" style="left:147.56px;top:214px;font-size:9px;color:#3a3f4b;transform:scaleX(0.9450);">183</div>
<div class="t" style="left:167.93px;top:214px;font-size:9px;color:#3a3f4b;transform:scaleX(0.9450);">28/04/2025</div>
<div class="t" style="left:340.72px;top:214px;font-size:9px;color:#3a3f4b;transform:scaleX(0.9450);">11097</div>
<div class="t" style="left:460.04px;top:214px;font-size:9px;color:#3a3f4b;transform:scaleX(0.9450);">4286</div>
<div class="t" style="left:484.93px;top:214px;font-size:9px;color:#3a3f4b;transform:scaleX(0.8953);">Disco de Serra Marmore para Madeiraxxxxx</div>
<div class="t" style="left:985.85px;top:214px;font-size:9px;color:#3a3f4b;transform:scaleX(0.9450);">2</div>
<div class="t" style="left:87.35px;top:228px;font-size:9px;color:#3a3f4b;transform:scaleX(0.9450);">1</div>
<div class="t" style="left:147.56px;top:228px;font-size:9px;color:#3a3f4b;transform:scaleX(0.9450);">174</div>
<div class="t" style="left:168.16px;top:228px;font-size:9px;color:#3a3f4b;transform:scaleX(0.9450);">08/05/2025</div>
<div class="t" style="left:341.43px;top:228px;font-size:9px;color:#3a3f4b;transform:scaleX(0.9450);">11103</div>
<div class="t" style="left:460.27px;top:228px;font-size:9px;color:#3a3f4b;transform:scaleX(0.9450);">1031</div>
<div class="t" style="left:485.60px;top:228px;font-size:9px;color:#3a3f4b;transform:scaleX(0.8308);">AGUA RAZ RAFBRAS 450ML</div>
<div class="t" style="left:985.85px;top:228px;font-size:9px;color:#3a3f4b;transform:scaleX(0.9450);">1</div>
<div class="t" style="left:87.35px;top:242px;font-size:9px;color:#3a3f4b;transform:scaleX(0.9450);">1</div>
<div class="t" style="left:147.56px;top:242px;font-size:9px;color:#3a3f4b;transform:scaleX(0.9450);">173</div>
<div class="t" style="left:168.16px;top:242px;font-size:9px;color:#3a3f4b;transform:scaleX(0.9450);">08/05/2025</div>
<div class="t" style="left:341.19px;top:242px;font-size:9px;color:#3a3f4b;transform:scaleX(0.9450);">11104</div>
<div class="t" style="left:460.04px;top:242px;font-size:9px;color:#3a3f4b;transform:scaleX(0.9450);">4014</div>
<div class="t" style="left:485.17px;top:242px;font-size:9px;color:#3a3f4b;transform:scaleX(0.8604);">CIMENTO 20</div>
<div class="t" style="left:985.85px;top:242px;font-size:9px;color:#3a3f4b;transform:scaleX(0.9450);">2</div>
<div class="t" style="left:87.35px;top:256px;font-size:9px;color:#3a3f4b;transform:scaleX(0.9450);">1</div>
<div class="t" style="left:147.56px;top:256px;font-size:9px;color:#3a3f4b;transform:scaleX(0.9450);">168</div>
<div class="t" style="left:167.69px;top:256px;font-size:9px;color:#3a3f4b;transform:scaleX(0.9450);">13/05/2025</div>
<div class="t" style="left:341.43px;top:256px;font-size:9px;color:#3a3f4b;transform:scaleX(0.9450);">11109</div>
<div class="t" style="left:460.04px;top:256px;font-size:9px;color:#3a3f4b;transform:scaleX(0.9450);">6254</div>
<div class="t" style="left:485.60px;top:256px;font-size:9px;color:#3a3f4b;transform:scaleX(0.8622);">ALICATE ANEIS EXT. CURVO MD III</div>
<div class="t" style="left:985.85px;top:256px;font-size:9px;color:#3a3f4b;transform:scaleX(0.9450);">2</div>
<div class="t" style="left:87.35px;top:271px;font-size:9px;color:#3a3f4b;transform:scaleX(0.9450);">1</div>
<div class="t" style="left:147.56px;top:271px;font-size:9px;color:#3a3f4b;transform:scaleX(0.9450);">168</div>
<div class="t" style="left:167.69px;top:271px;font-size:9px;color:#3a3f4b;transform:scaleX(0.9450);">13/05/2025</div>
<div class="t" style="left:341.90px;top:271px;font-size:9px;color:#3a3f4b;transform:scaleX(0.9450);">11110</div>
<div class="t" style="left:445.86px;top:271px;font-size:9px;color:#3a3f4b;transform:scaleX(0.9450);">1237063</div>
<div class="t" style="left:484.97px;top:271px;font-size:9px;color:#3a3f4b;transform:scaleX(0.8352);">PLACA DE VIDEO RTX 4090 GTX 12GB NVIDIA</div>
<div class="t" style="left:985.85px;top:271px;font-size:9px;color:#3a3f4b;transform:scaleX(0.9450);">2</div>
<div class="t" style="left:87.35px;top:285px;font-size:9px;color:#3a3f4b;transform:scaleX(0.9450);">1</div>
<div class="t" style="left:157.01px;top:285px;font-size:9px;color:#3a3f4b;transform:scaleX(0.9450);">0</div>
<div class="t" style="left:167.93px;top:285px;font-size:9px;color:#3a3f4b;transform:scaleX(0.9450);">29/10/2025</div>
<div class="t" style="left:340.72px;top:285px;font-size:9px;color:#3a3f4b;transform:scaleX(0.9450);">11566</div>
<div class="t" style="left:445.86px;top:285px;font-size:9px;color:#3a3f4b;transform:scaleX(0.9450);">1237063</div>
<div class="t" style="left:484.97px;top:285px;font-size:9px;color:#3a3f4b;transform:scaleX(0.8352);">PLACA DE VIDEO RTX 4090 GTX 12GB NVIDIA</div>
<div class="t" style="left:985.85px;top:285px;font-size:9px;color:#3a3f4b;transform:scaleX(0.9450);">1</div>
<div class="t" style="left:87.35px;top:299px;font-size:9px;color:#3a3f4b;transform:scaleX(0.9450);">1</div>
<div class="t" style="left:157.01px;top:299px;font-size:9px;color:#3a3f4b;transform:scaleX(0.9450);">0</div>
<div class="t" style="left:167.93px;top:299px;font-size:9px;color:#3a3f4b;transform:scaleX(0.9450);">29/10/2025</div>
<div class="t" style="left:340.72px;top:299px;font-size:9px;color:#3a3f4b;transform:scaleX(0.9450);">11568</div>
<div class="t" style="left:460.04px;top:299px;font-size:9px;color:#3a3f4b;transform:scaleX(0.9450);">4286</div>
<div class="t" style="left:484.93px;top:299px;font-size:9px;color:#3a3f4b;transform:scaleX(0.8953);">Disco de Serra Marmore para Madeiraxxxxx</div>
<div class="t" style="left:985.85px;top:299px;font-size:9px;color:#3a3f4b;transform:scaleX(0.9450);">1</div>
<div class="t" style="left:87.35px;top:314px;font-size:9px;color:#3a3f4b;transform:scaleX(0.9450);">1</div>
<div class="t" style="left:157.01px;top:314px;font-size:9px;color:#3a3f4b;transform:scaleX(0.9450);">0</div>
<div class="t" style="left:167.93px;top:314px;font-size:9px;color:#3a3f4b;transform:scaleX(0.9450);">29/10/2025</div>
<div class="t" style="left:340.72px;top:314px;font-size:9px;color:#3a3f4b;transform:scaleX(0.9450);">11569</div>
<div class="t" style="left:460.04px;top:314px;font-size:9px;color:#3a3f4b;transform:scaleX(0.9450);">4286</div>
<div class="t" style="left:484.93px;top:314px;font-size:9px;color:#3a3f4b;transform:scaleX(0.8953);">Disco de Serra Marmore para Madeiraxxxxx</div>
<div class="t" style="left:985.85px;top:314px;font-size:9px;color:#3a3f4b;transform:scaleX(0.9450);">2</div>
<div class="t" style="left:87.35px;top:328px;font-size:9px;color:#3a3f4b;transform:scaleX(0.9450);">1</div>
<div class="t" style="left:157.01px;top:328px;font-size:9px;color:#3a3f4b;transform:scaleX(0.9450);">0</div>
<div class="t" style="left:167.93px;top:328px;font-size:9px;color:#3a3f4b;transform:scaleX(0.9450);">29/10/2025</div>
<div class="t" style="left:340.72px;top:328px;font-size:9px;color:#3a3f4b;transform:scaleX(0.9450);">11570</div>
<div class="t" style="left:460.04px;top:328px;font-size:9px;color:#3a3f4b;transform:scaleX(0.9450);">4286</div>
<div class="t" style="left:484.93px;top:328px;font-size:9px;color:#3a3f4b;transform:scaleX(0.8953);">Disco de Serra Marmore para Madeiraxxxxx</div>
<div class="t" style="left:985.85px;top:328px;font-size:9px;color:#3a3f4b;transform:scaleX(0.9450);">1</div>
<div class="r" style="left:12.39px;top:114.91px;font-size:9.2px;color:#fff;transform:rotate(90deg) scaleX(0.9228);">Menu principal (F11)</div>
<div class="r" style="left:1019.99px;top:114.93px;font-size:9.2px;color:#fff;transform:rotate(90deg) scaleX(0.8929);">Meu menu (F12)</div>

<!-- red rects -->
<div class="a" style="left:444.600px;top:131.800px;width:99.700px;height:38.500px;border:3px solid #ed1c24"></div>
<div class="a" style="left:317px;top:319.300px;width:60.600px;height:26.500px;border:3px solid #ed1c24"></div>
<div class="a" style="left:866.100px;top:474px;width:132.600px;height:37.800px;border:3px solid #ed1c24"></div>
</body>
</html>
